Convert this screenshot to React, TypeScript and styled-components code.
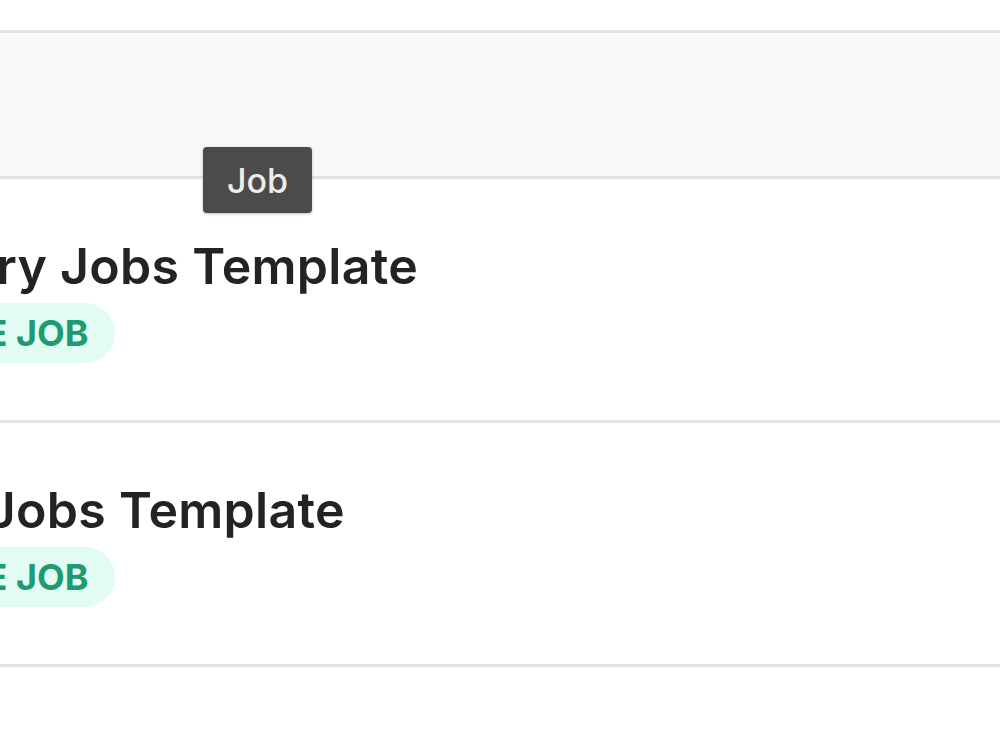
import styled, { createGlobalStyle } from "styled-components";

const GlobalStyle = createGlobalStyle`
  html, body {
    margin: 0;
    padding: 0;
    background: #ffffff;
  }
  body {
    font-family: Inter, "Noto Sans", "Liberation Sans", sans-serif;
    color: #222222;
  }
`;

const Page = styled.div`
  position: relative;
  width: 100%;
  height: 749px;
  overflow: hidden;
  background: #ffffff;
  padding-top: 30px;
  box-sizing: border-box;
`;

const HeaderBand = styled.div`
  height: 143px;
  background: #f8f8f8;
  border-top: 3px solid #e3e3e3;
  border-bottom: 3px solid #e3e3e3;
`;

const List = styled.div`
  display: flex;
  flex-direction: column;
`;

// the table is scrolled sideways, so the start of each cell is cut off
const Row = styled.div`
  display: flex;
  flex-direction: column;
  align-items: flex-start;
  gap: 8px;
  height: 244px;
  box-sizing: border-box;
  padding-top: 58px;
  margin-left: -219px;
  border-bottom: 3px solid #e3e3e3;
`;

const Title = styled.div`
  font-size: 50px;
  font-weight: 600;
  line-height: 58px;
  color: #232323;
  white-space: nowrap;
  letter-spacing: 0.3px;
`;

const Pill = styled.span`
  display: inline-flex;
  align-items: center;
  height: 60px;
  padding: 0 26px 0 37px;
  border-radius: 30px;
  background: #e2fcf4;
  color: #1f9b72;
  font-size: 36px;
  font-weight: 700;
  text-transform: uppercase;
  white-space: nowrap;
`;

const Tooltip = styled.div`
  position: absolute;
  left: 203px;
  top: 147px;
  width: 109px;
  height: 66px;
  display: flex;
  align-items: center;
  justify-content: center;
  background: #4b4b4c;
  border-radius: 4px;
  box-shadow: 0 1px 3px rgba(0, 0, 0, 0.25);
  color: #ececec;
  font-size: 34px;
  font-weight: 500;
`;

const jobs = [
  { title: "Temporary Jobs Template", status: "Full-Time Job" },
  { title: "Nursing Jobs Template", status: "Full-Time Job" },
];

export default function App() {
  return (
    <>
      <GlobalStyle />
      <Page>
        <HeaderBand />
        <List>
          {jobs.map((job) => (
            <Row key={job.title}>
              <Title>{job.title}</Title>
              <Pill>{job.status}</Pill>
            </Row>
          ))}
        </List>
        <Tooltip>Job</Tooltip>
      </Page>
    </>
  );
}
